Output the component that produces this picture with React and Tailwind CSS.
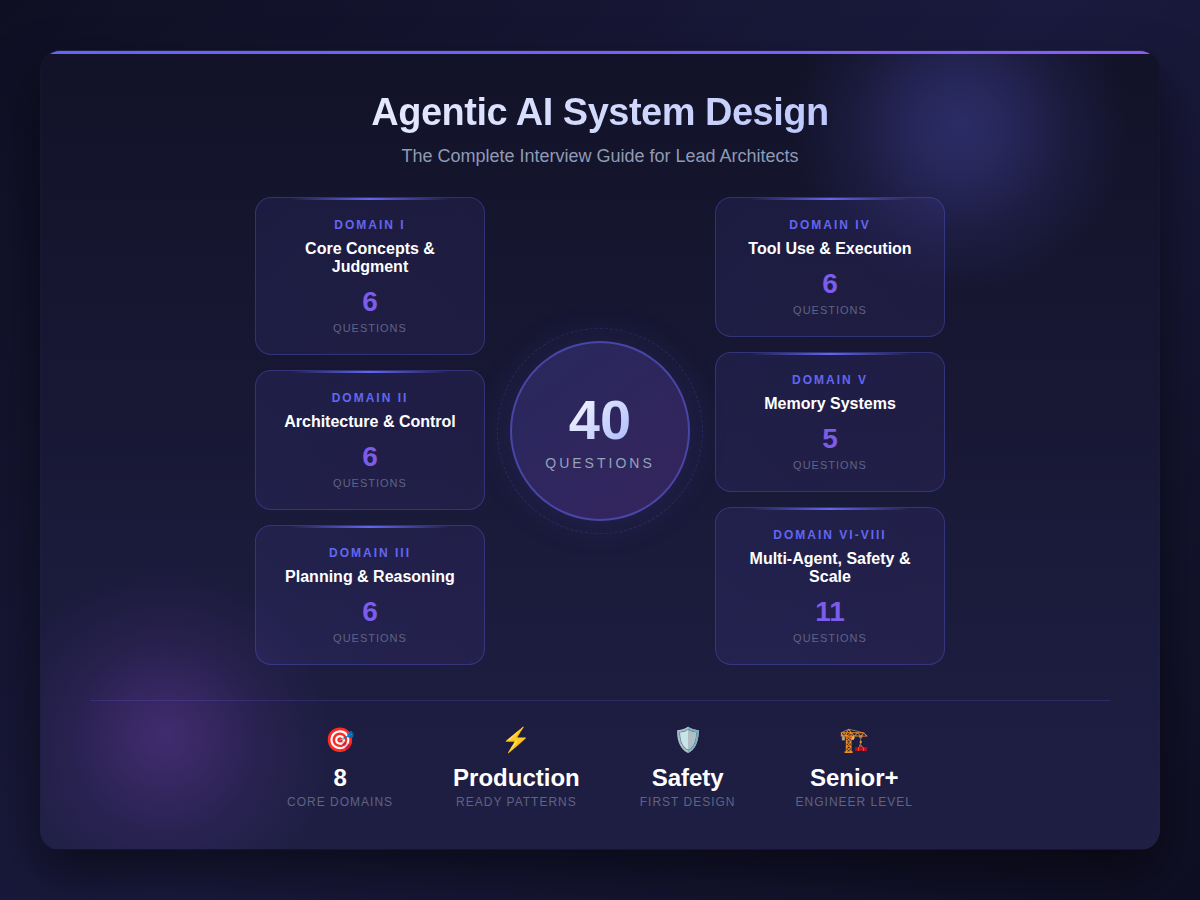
const left = [
  { label: 'DOMAIN I', title: 'Core Concepts & Judgment', count: 6 },
  { label: 'DOMAIN II', title: 'Architecture & Control', count: 6 },
  { label: 'DOMAIN III', title: 'Planning & Reasoning', count: 6 },
];

const right = [
  { label: 'DOMAIN IV', title: 'Tool Use & Execution', count: 6 },
  { label: 'DOMAIN V', title: 'Memory Systems', count: 5 },
  { label: 'DOMAIN VI-VIII', title: 'Multi-Agent, Safety & Scale', count: 11 },
];

const stats = [
  { icon: '🎯', value: '8', label: 'CORE DOMAINS' },
  { icon: '⚡', value: 'Production', label: 'READY PATTERNS' },
  { icon: '🛡️', value: 'Safety', label: 'FIRST DESIGN' },
  { icon: '🏗️', value: 'Senior+', label: 'ENGINEER LEVEL' },
];

const DomainCard = ({ label, title, count }) => (
  <div className="relative w-[230px] overflow-hidden rounded-2xl border border-[#6366f14d] bg-[linear-gradient(135deg,rgba(99,102,241,0.1),rgba(139,92,246,0.08))] px-5 pt-5 pb-[19px] text-center">
    <div className="absolute top-0 right-[15%] left-[15%] h-0.5 bg-[linear-gradient(90deg,transparent,#6366f1,transparent)]" />
    <div className="text-xs leading-[14px] font-bold tracking-[2px] text-[#6366f1]">{label}</div>
    <div className="mt-2 text-base leading-[18px] font-bold text-white">{title}</div>
    <div className="mt-2.5 text-[28px] leading-8 font-bold text-[#7c5ce8]">{count}</div>
    <div className="mt-1 text-[11px] leading-[13px] tracking-[1px] text-[#5f6384]">QUESTIONS</div>
  </div>
);

const App = () => {
  return (
    <div className="flex h-[900px] w-[1200px] items-center justify-center overflow-hidden bg-[linear-gradient(135deg,#0f0f23_0%,#1a1a3e_50%,#0f0f23_100%)] font-['Liberation_Sans',Arial,sans-serif]">
      <div className="relative h-[800px] w-[1120px] overflow-hidden rounded-[20px] border border-[#ffffff03] bg-[linear-gradient(180deg,#121228,#1f1f45)] shadow-[0_25px_50px_rgba(0,0,0,0.5)]">
        {/* glows */}
        <div className="absolute top-[-96px] right-[29px] h-[340px] w-[340px] bg-[radial-gradient(circle,rgba(99,102,241,0.3)_0%,rgba(99,102,241,0.23)_21%,rgba(99,102,241,0.09)_46%,transparent_70%)]" />
        <div className="absolute bottom-[-56px] left-[-46px] h-[340px] w-[340px] bg-[radial-gradient(circle,rgba(168,85,247,0.25)_0%,rgba(168,85,247,0.17)_21%,rgba(168,85,247,0.08)_40%,transparent_70%)]" />
        <div className="absolute top-0 left-0 h-[3px] w-full bg-[linear-gradient(90deg,#6366f1,#8b5cf6)]" />

        <div className="relative px-[49px] pt-[39px]">
          <h1 className="bg-[linear-gradient(135deg,#ffffff,#a5b4fc)] bg-clip-text text-center text-[38px] leading-11 font-bold tracking-[-0.5px] text-transparent">
            Agentic AI System Design
          </h1>
          <p className="mt-3 text-center text-lg leading-[21px] text-[#8f9bb5]">
            The Complete Interview Guide for Lead Architects
          </p>

          <div className="mt-[30px] flex items-center justify-center gap-[25px]">
            <div className="flex flex-col gap-[15px]">
              {left.map((d) => (
                <DomainCard key={d.label} {...d} />
              ))}
            </div>

            <div className="relative flex h-[180px] w-[180px] flex-col items-center justify-center rounded-full border-2 border-[#6366f180] bg-[linear-gradient(145deg,rgba(99,102,241,0.22),rgba(168,85,247,0.2))] pb-1 shadow-[0_0_40px_rgba(99,102,241,0.15)]">
              <div className="absolute top-[-15px] left-[-15px] h-[206px] w-[206px] rounded-full border border-dashed border-[#6366f133]" />
              <div className="bg-[linear-gradient(135deg,#ffffff,#a5b4fc)] bg-clip-text text-[56px] leading-16 font-bold text-transparent">40</div>
              <div className="mt-[3px] text-sm leading-4 tracking-[3px] text-[#94a3b8]">QUESTIONS</div>
            </div>

            <div className="flex flex-col gap-[15px]">
              {right.map((d) => (
                <DomainCard key={d.label} {...d} />
              ))}
            </div>
          </div>

          <div className="mt-[35px] flex justify-center gap-[60px] border-t border-[#6366f133] pt-[25px]">
            {stats.map((s) => (
              <div key={s.label} className="text-center">
                <div className="text-2xl leading-7">{s.icon}</div>
                <div className="mt-2.5 text-2xl leading-7 font-bold text-white">{s.value}</div>
                <div className="mt-[3px] text-xs leading-[14px] tracking-[1px] text-[#5f6384]">{s.label}</div>
              </div>
            ))}
          </div>
        </div>
      </div>
    </div>
  );
};

export default App;
